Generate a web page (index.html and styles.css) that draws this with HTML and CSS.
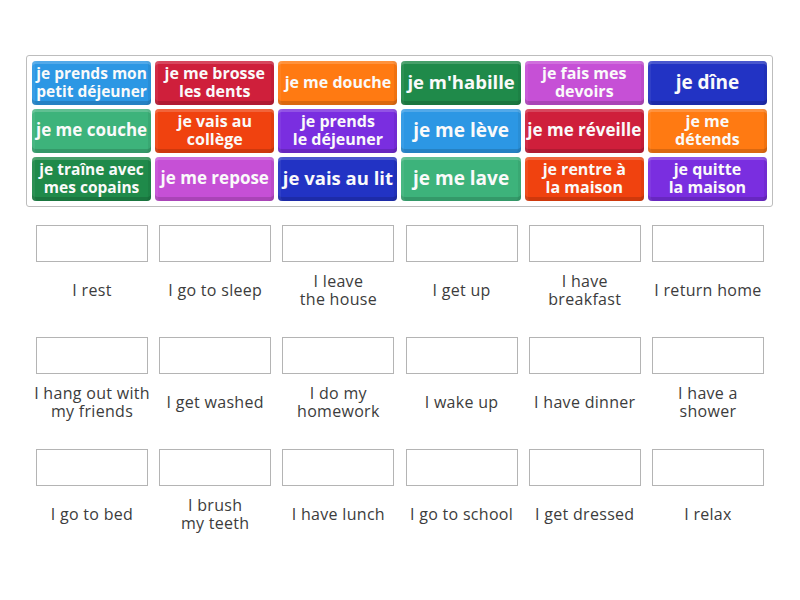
FILE: index.html
```html
<!DOCTYPE html>
<html lang="fr">
<head>
<meta charset="utf-8">
<title>Match up</title>
<link rel="stylesheet" href="styles.css">
</head>
<body>
<div class="page">
  <div class="bank">
    <div class="tile blue fs15">je prends mon<br>petit déjeuner</div>
    <div class="tile crimson fs16">je me brosse<br>les dents</div>
    <div class="tile orange fs16">je me douche</div>
    <div class="tile dgreen fs18">je m'habille</div>
    <div class="tile orchid fs16">je fais mes<br>devoirs</div>
    <div class="tile navy fs19">je dîne</div>

    <div class="tile teal fs17">je me couche</div>
    <div class="tile redorange fs16">je vais au<br>collège</div>
    <div class="tile purple fs16">je prends<br>le déjeuner</div>
    <div class="tile blue fs19">je me lève</div>
    <div class="tile crimson fs17">je me réveille</div>
    <div class="tile orange fs16">je me<br>détends</div>

    <div class="tile dgreen fs15">je traîne avec<br>mes copains</div>
    <div class="tile orchid fs17">je me repose</div>
    <div class="tile navy fs18">je vais au lit</div>
    <div class="tile teal fs19">je me lave</div>
    <div class="tile redorange fs16">je rentre à<br>la maison</div>
    <div class="tile purple fs16">je quitte<br>la maison</div>
  </div>

  <div class="targets">
    <div class="slot"><div class="box"></div><div class="label">I rest</div></div>
    <div class="slot"><div class="box"></div><div class="label">I go to sleep</div></div>
    <div class="slot"><div class="box"></div><div class="label">I leave<br>the house</div></div>
    <div class="slot"><div class="box"></div><div class="label">I get up</div></div>
    <div class="slot"><div class="box"></div><div class="label">I have<br>breakfast</div></div>
    <div class="slot"><div class="box"></div><div class="label">I return home</div></div>

    <div class="slot"><div class="box"></div><div class="label">I hang out with<br>my friends</div></div>
    <div class="slot"><div class="box"></div><div class="label">I get washed</div></div>
    <div class="slot"><div class="box"></div><div class="label">I do my<br>homework</div></div>
    <div class="slot"><div class="box"></div><div class="label">I wake up</div></div>
    <div class="slot"><div class="box"></div><div class="label">I have dinner</div></div>
    <div class="slot"><div class="box"></div><div class="label">I have a<br>shower</div></div>

    <div class="slot"><div class="box"></div><div class="label">I go to bed</div></div>
    <div class="slot"><div class="box"></div><div class="label">I brush<br>my teeth</div></div>
    <div class="slot"><div class="box"></div><div class="label">I have lunch</div></div>
    <div class="slot"><div class="box"></div><div class="label">I go to school</div></div>
    <div class="slot"><div class="box"></div><div class="label">I get dressed</div></div>
    <div class="slot"><div class="box"></div><div class="label">I relax</div></div>
  </div>
</div>
</body>
</html>
```

FILE: styles.css
```css
* { box-sizing: border-box; }
html, body { margin: 0; padding: 0; background: #fff; }
body { font-family: "Open Sans", "Liberation Sans", sans-serif; }

.page {
  width: 800px;
  height: 600px;
  padding: 55px 0 0 26px;
}

.bank {
  width: 747px;
  border: 1px solid #bdbdbd;
  border-radius: 3px;
  padding: 5px;
  display: grid;
  grid-template-columns: repeat(6, 1fr);
  grid-auto-rows: 44px;
  column-gap: 4px;
  row-gap: 4px;
}

.tile {
  border-radius: 4px;
  color: #fafafa;
  font-weight: 700;
  text-align: center;
  display: flex;
  align-items: center;
  justify-content: center;
  line-height: 18px;
  padding: 0 2px 2px;
  box-shadow:
    inset 0 3px 0 rgba(255,255,255,0.18),
    inset 3px 0 0 rgba(255,255,255,0.06),
    inset -3px 0 0 rgba(0,0,0,0.06),
    inset 0 -4px 0 rgba(0,0,0,0.14);
}

.fs15 { font-size: 15.5px; }
.fs16 { font-size: 16px; }
.fs17 { font-size: 17px; }
.fs18 { font-size: 18.5px; }
.fs19 { font-size: 19px; }

.blue { background: #2c97e4; }
.crimson { background: #cf1f3b; }
.orange { background: #ff7a12; }
.dgreen { background: #1f8a4a; }
.orchid { background: #c650d6; }
.navy { background: #2233c4; }
.teal { background: #3db37b; }
.redorange { background: #f0420f; }
.purple { background: #7a2ee0; }

.targets {
  width: 728px;
  margin: 18px 0 0 10px;
  display: grid;
  grid-template-columns: repeat(6, 112px);
  justify-content: space-between;
  row-gap: 19px;
}

.slot {
  display: flex;
  flex-direction: column;
}

.box {
  height: 37px;
  border: 1px solid #b4b4b4;
  background: #fff;
}

.label {
  height: 56px;
  display: flex;
  align-items: center;
  justify-content: center;
  text-align: center;
  font-size: 16px;
  line-height: 18px;
  letter-spacing: 0.3px;
  color: #3c3c3c;
  white-space: nowrap;
  margin: 0 -8px;
}
```
